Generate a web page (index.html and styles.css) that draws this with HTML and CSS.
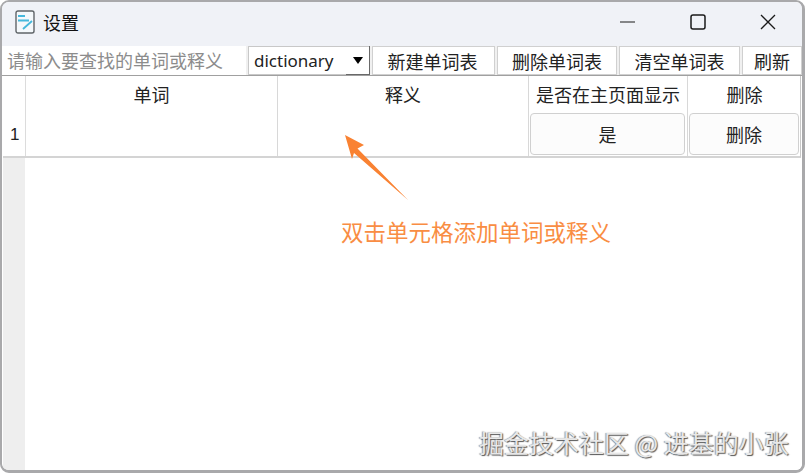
FILE: index.html
```html
<!DOCTYPE html>
<html lang="zh-CN">
<head>
<meta charset="utf-8">
<title>设置</title>
<link rel="stylesheet" href="styles.css">
</head>
<body>
<div class="window">
  <header class="titlebar">
    <svg class="app-icon" width="20" height="24" viewBox="0 0 20 24">
      <rect x="1" y="1" width="18" height="22" rx="2" fill="#f4f8fb" stroke="#5f6468" stroke-width="1.4"/>
      <path d="M3 6h7M3 10.500h11M8 19l9-8" fill="none" stroke="#45b8dc" stroke-width="1.800"/>
    </svg>
    <span class="title">设置</span>
    <div class="controls">
      <svg class="ctl" width="16" height="16" viewBox="0 0 16 16"><path d="M0 8h15" stroke="#1a1a1a" stroke-width="1.200"/></svg>
      <svg class="ctl" width="16" height="16" viewBox="0 0 16 16"><rect x="1" y="1" width="14" height="14" rx="2" fill="none" stroke="#1a1a1a" stroke-width="1.500"/></svg>
      <svg class="ctl" width="16" height="16" viewBox="0 0 16 16"><path d="M1 1l14 14M15 1L1 15" stroke="#1a1a1a" stroke-width="1.300"/></svg>
    </div>
  </header>
  <div class="toolbar">
    <div class="search">请输入要查找的单词或释义</div>
    <div class="combo"><span class="combo-text">dictionary</span><span class="combo-drop"><span class="combo-arrow"></span></span></div>
    <button class="tool w-new">新建单词表</button>
    <button class="tool w-del">删除单词表</button>
    <button class="tool w-clr">清空单词表</button>
    <button class="tool w-ref">刷新</button>
  </div>
  <div class="sheet">
    <div class="grid">
      <div class="corner"></div>
      <div class="head line">单词</div>
      <div class="head line">释义</div>
      <div class="head line">是否在主页面显示</div>
      <div class="head">删除</div>
      <div class="rownum">1</div>
      <div class="cell line"></div>
      <div class="cell line"></div>
      <div class="cell line btn-cell"><button class="cell-btn">是</button></div>
      <div class="cell btn-cell"><button class="cell-btn">删除</button></div>
    </div>
    <div class="rest">
      <div class="gutter"></div>
      <div class="blank"></div>
    </div>
  </div>
  <svg class="arrow" width="70" height="70" viewBox="0 0 70 70">
    <path d="M1 0L20 10 13.500 13.500 64 65 10 18 8 24Z" fill="#f98232"/>
  </svg>
  <div class="note">双击单元格添加单词或释义</div>
  <div class="mark">掘金技术社区 @ 进基的小张</div>
</div>
</body>
</html>
```
FILE: styles.css
```css
* { box-sizing: border-box; }
html, body { margin: 0; height: 100%; }
body {
  background: #fff;
  font-family: "Noto Sans CJK SC", "Liberation Sans", sans-serif;
  overflow: hidden;
}
.window {
  position: relative;
  width: 805px;
  height: 473px;
  background: #fff;
  border: 2px solid #a9a9ab;
  border-bottom-width: 3px;
  border-right-width: 3px;
  border-radius: 9px;
  overflow: hidden;
  display: flex;
  flex-direction: column;
}
.titlebar {
  height: 44px;
  flex: none;
  background: #f0f2f7;
  display: flex;
  align-items: center;
  padding: 0 0 4px 13px;
}
.title { margin-left: 8px; font-size: 18px; line-height: 24px; color: #111; }
.controls {
  margin-left: auto;
  display: flex;
  gap: 54px;
  padding-right: 26px;
}
.toolbar {
  height: 30px;
  flex: none;
  display: flex;
  background: #f0f0f0;
  border-bottom: 1px solid #a0a0a0;
}
.search {
  width: 244px;
  background: #fff;
  color: #8c8c8c;
  font-size: 18px;
  line-height: 29px;
  padding-left: 5px;
  white-space: nowrap;
}
.combo {
  width: 122px;
  margin-left: 2px;
  height: 29px;
  background: #fff;
  border: 1px solid #c8c8c8;
  display: flex;
  align-items: center;
  position: relative;
  padding-left: 5px;
}
.combo-text { font-family: "Noto Sans", sans-serif; font-size: 17px; color: #222; }
.combo-drop {
  position: absolute;
  right: -1px;
  bottom: -1px;
  width: 24px;
  height: 29px;
  border-right: 1px solid #696969;
  border-bottom: 1px solid #696969;
}
.combo-arrow {
  position: absolute;
  right: 6px;
  top: 11px;
  border-left: 5px solid transparent;
  border-right: 5px solid transparent;
  border-top: 7px solid #000;
}
.tool {
  height: 29px;
  padding: 0;
  margin-left: 2px;
  background: #fff;
  border: 1px solid #d0d0d0;
  font-family: inherit;
  font-size: 18px;
  color: #222;
  white-space: nowrap;
}
.w-new { width: 123px; padding-right: 2px; }
.w-del { width: 120px; }
.w-clr { width: 121px; }
.w-ref { width: 60px; }
.sheet {
  flex: 1;
  display: flex;
  flex-direction: column;
  min-height: 0;
}
.grid {
  display: grid;
  grid-template-columns: 23px 252px 251px 159px 113px;
  grid-template-rows: 37px 43px;
  width: 798px;
  margin-left: 1px;
  border-right: 1px solid #c8c8c8;
  border-bottom: 2px solid #d4d4d4;
  font-size: 18px;
  color: #222;
}
.corner, .rownum { border-right: 1px solid #dcdcdc; }
.head {
  text-align: center;
  line-height: 36px;
}
.line { border-right: 1px solid #d8d8d8; }
.rownum {
  font-size: 17px;
  font-family: "Liberation Sans", sans-serif;
  padding-left: 7px;
  line-height: 44px;
}
.btn-cell { padding: 0 2px 1px 1px; }
.cell-btn {
  width: 100%;
  height: 100%;
  padding: 0;
  font-family: inherit;
  font-size: 18px;
  color: #222;
  background: #fcfcfc;
  border: 1px solid #d0d0d0;
  border-radius: 4px;
}
.rest { flex: 1; display: flex; margin-left: 1px; }
.gutter { width: 22px; background: #eeeeee; }
.blank { flex: 1; background: #fff; }
.arrow { position: absolute; left: 342px; top: 133px; }
.note {
  position: absolute;
  left: 339px;
  top: 213px;
  font-size: 22.500px;
  line-height: 32px;
  color: #f98d43;
  white-space: nowrap;
}
.mark {
  position: absolute;
  left: 477px;
  top: 423px;
  font-size: 25px;
  line-height: 34px;
  color: #e8e8e8;
  text-shadow: 1px 1px 1px #555, -1px 0 1px #999;
  white-space: nowrap;
}
```
